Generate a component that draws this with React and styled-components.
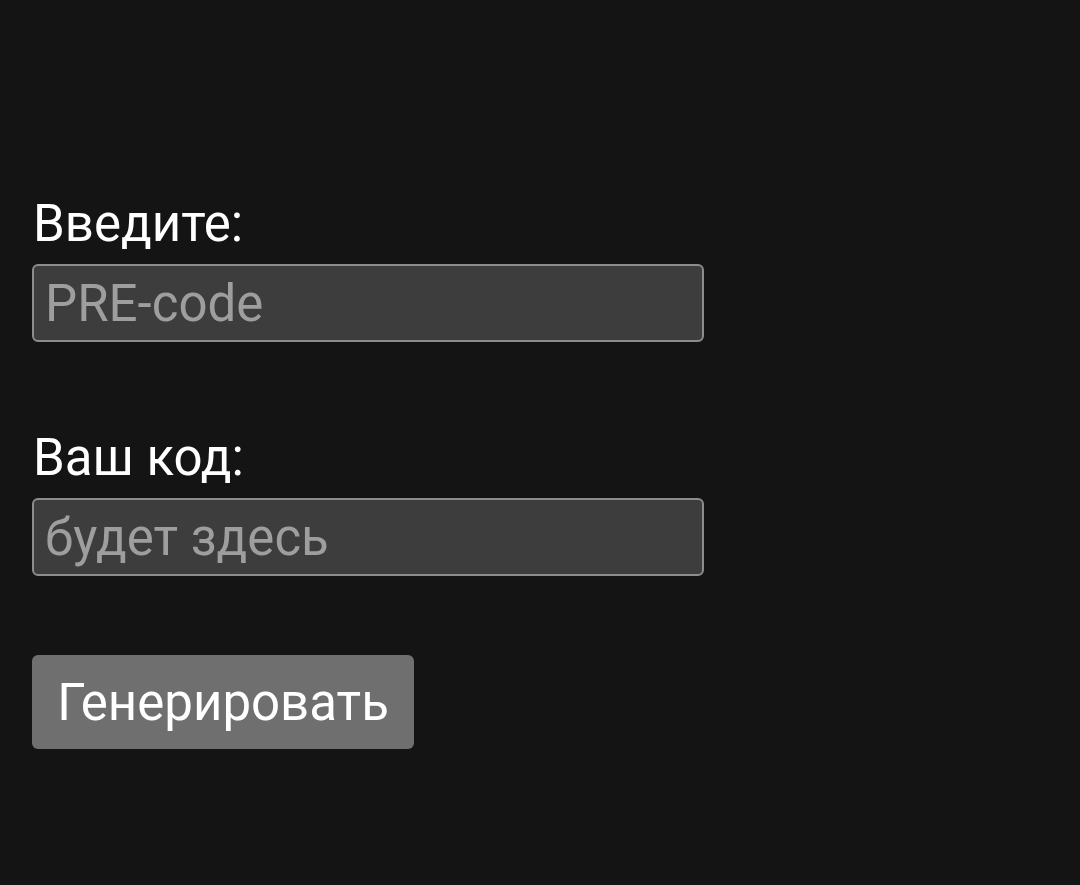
import React from 'react';
import styled, { createGlobalStyle } from 'styled-components';

const GlobalStyle = createGlobalStyle`
  html, body {
    margin: 0;
    padding: 0;
    background-color: #141414;
  }
  body {
    font-family: Roboto, "Noto Sans", sans-serif;
  }
`;

const Page = styled.div`
  min-height: 885px;
  padding: 194px 32px 0;
  box-sizing: border-box;
  display: flex;
  flex-direction: column;
  align-items: flex-start;
`;

const Field = styled.div`
  display: flex;
  flex-direction: column;
  margin-bottom: ${props => props.gap}px;
`;

const Label = styled.label`
  color: #ffffff;
  font-size: 51px;
  line-height: 60px;
  margin: 0 0 10px 1px;
`;

const Input = styled.input`
  box-sizing: border-box;
  width: 672px;
  height: 78px;
  padding: 0 11px;
  background-color: #3d3d3d;
  border: 2px solid #8c8c8c;
  border-radius: 6px;
  color: #ffffff;
  font-family: Roboto, sans-serif;
  font-size: 51px;
  outline: none;

  &::placeholder {
    color: #9e9e9e;
  }
`;

const Button = styled.button`
  width: 382px;
  height: 94px;
  padding: 0;
  background-color: #6f6f6f;
  border: none;
  border-radius: 6px;
  color: #ffffff;
  font-family: Roboto, sans-serif;
  font-size: 51px;
  cursor: pointer;
`;

export default function App() {
  return (
    <>
      <GlobalStyle />
      <Page>
        <Field gap={86}>
          <Label htmlFor="pre">Введите:</Label>
          <Input id="pre" placeholder="PRE-code" />
        </Field>
        <Field gap={79}>
          <Label htmlFor="code">Ваш код:</Label>
          <Input id="code" placeholder="будет здесь" readOnly />
        </Field>
        <Button>Генерировать</Button>
      </Page>
    </>
  );
}
